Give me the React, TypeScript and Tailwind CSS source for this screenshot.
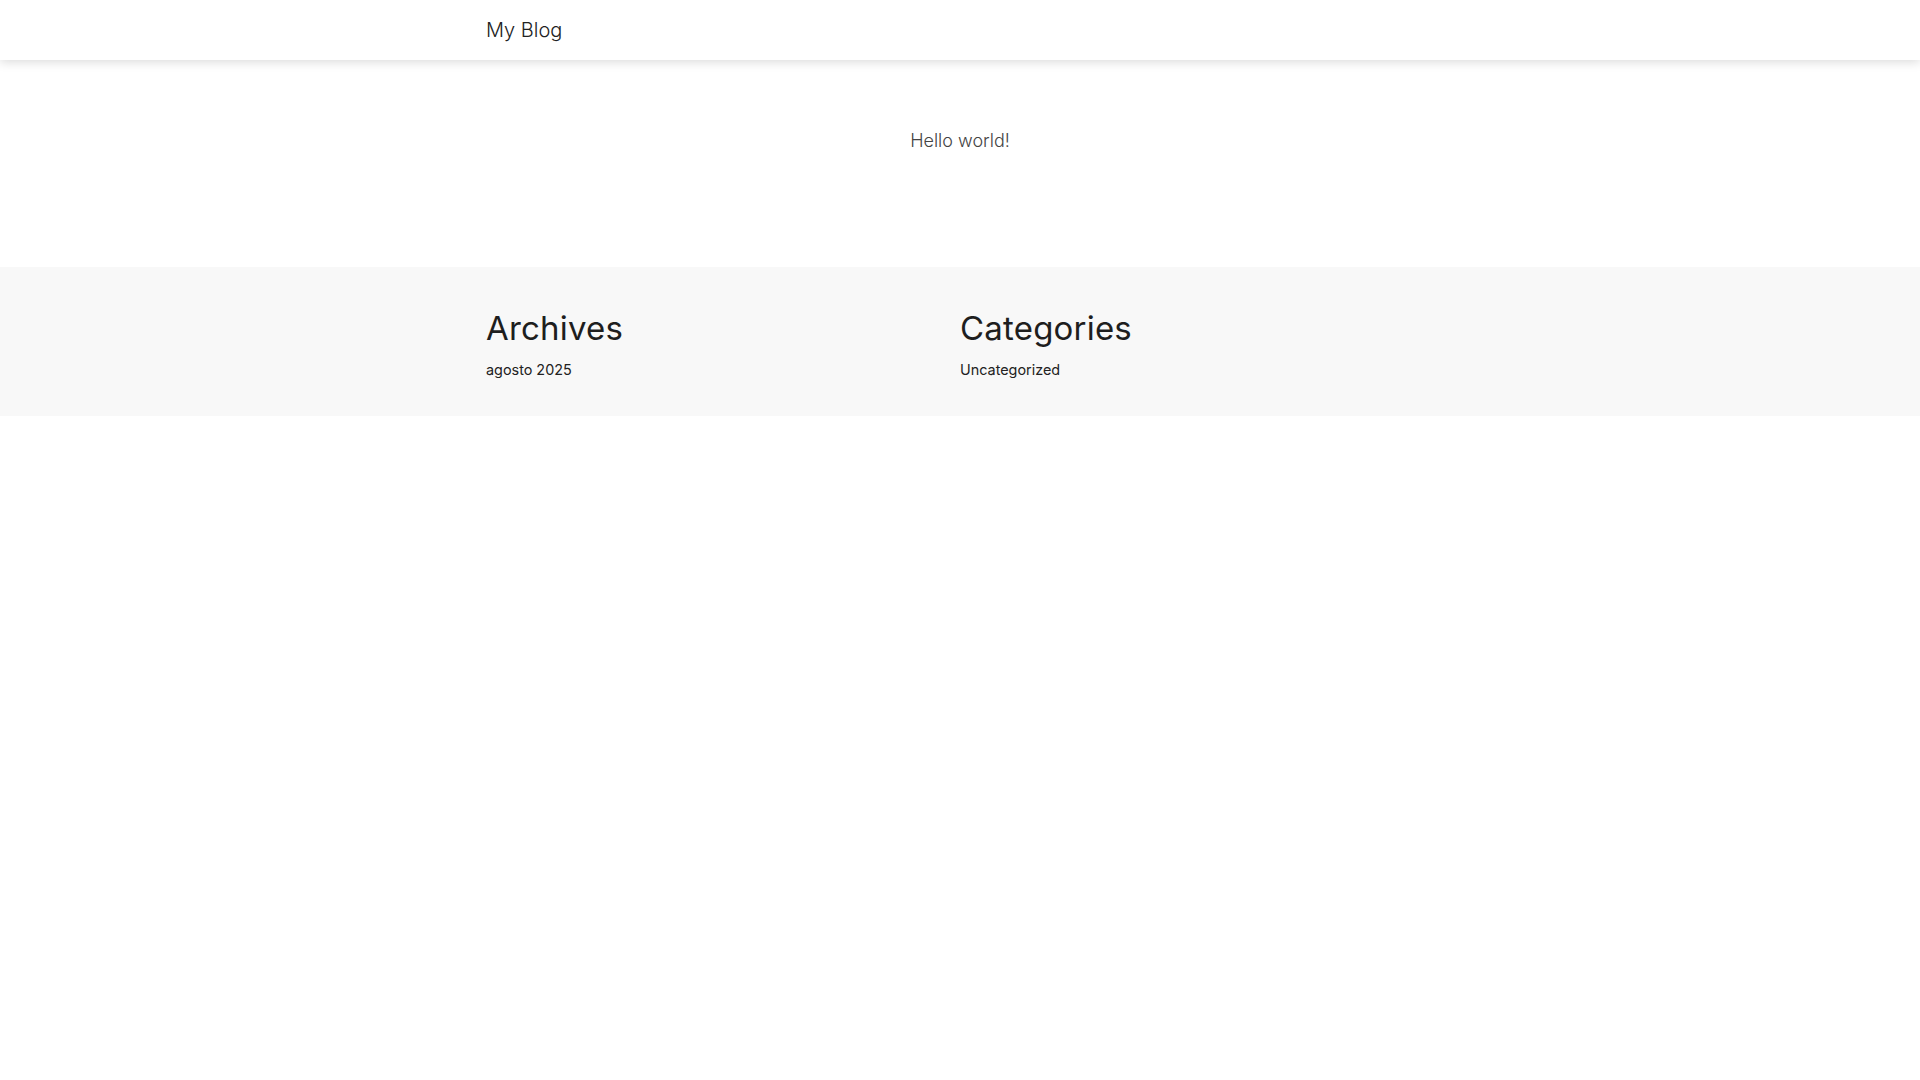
import React from 'react';

const font = { fontFamily: 'Inter, "Open Sans", sans-serif' };

function Widget({ title, items }: { title: string; items: string[] }) {
  return (
    <div>
      <h2 className="text-[33px] font-normal leading-[40px] text-[#1e1e1e] tracking-[0.2px]">{title}</h2>
      <ul className="mt-[9px]">
        {items.map((it) => (
          <li key={it}>
            <a href="#" className="text-[14.4px] leading-[20px] text-[#222]">
              {it}
            </a>
          </li>
        ))}
      </ul>
    </div>
  );
}

export default function App() {
  return (
    <div className="min-h-screen bg-white font-['Inter']" style={font}>
      <header className="h-[60px] bg-white shadow-[0_2px_10px_rgba(0,0,0,0.15)] relative z-10">
        <div className="w-[948px] mx-auto h-full flex items-center">
          <a href="#" className="text-[20px] font-light text-[#222] leading-none">
            My Blog
          </a>
        </div>
      </header>

      <main className="h-[207px] pt-[67px] flex justify-center">
        <a href="#" className="text-[18px] font-light text-[#444] leading-[27px] h-fit">
          Hello world!
        </a>
      </main>

      <footer className="bg-[#f8f8f8] h-[149px]">
        <div className="w-[948px] mx-auto grid grid-cols-2 pt-[41px]">
          <Widget title="Archives" items={['agosto 2025']} />
          <Widget title="Categories" items={['Uncategorized']} />
        </div>
      </footer>
    </div>
  );
}
